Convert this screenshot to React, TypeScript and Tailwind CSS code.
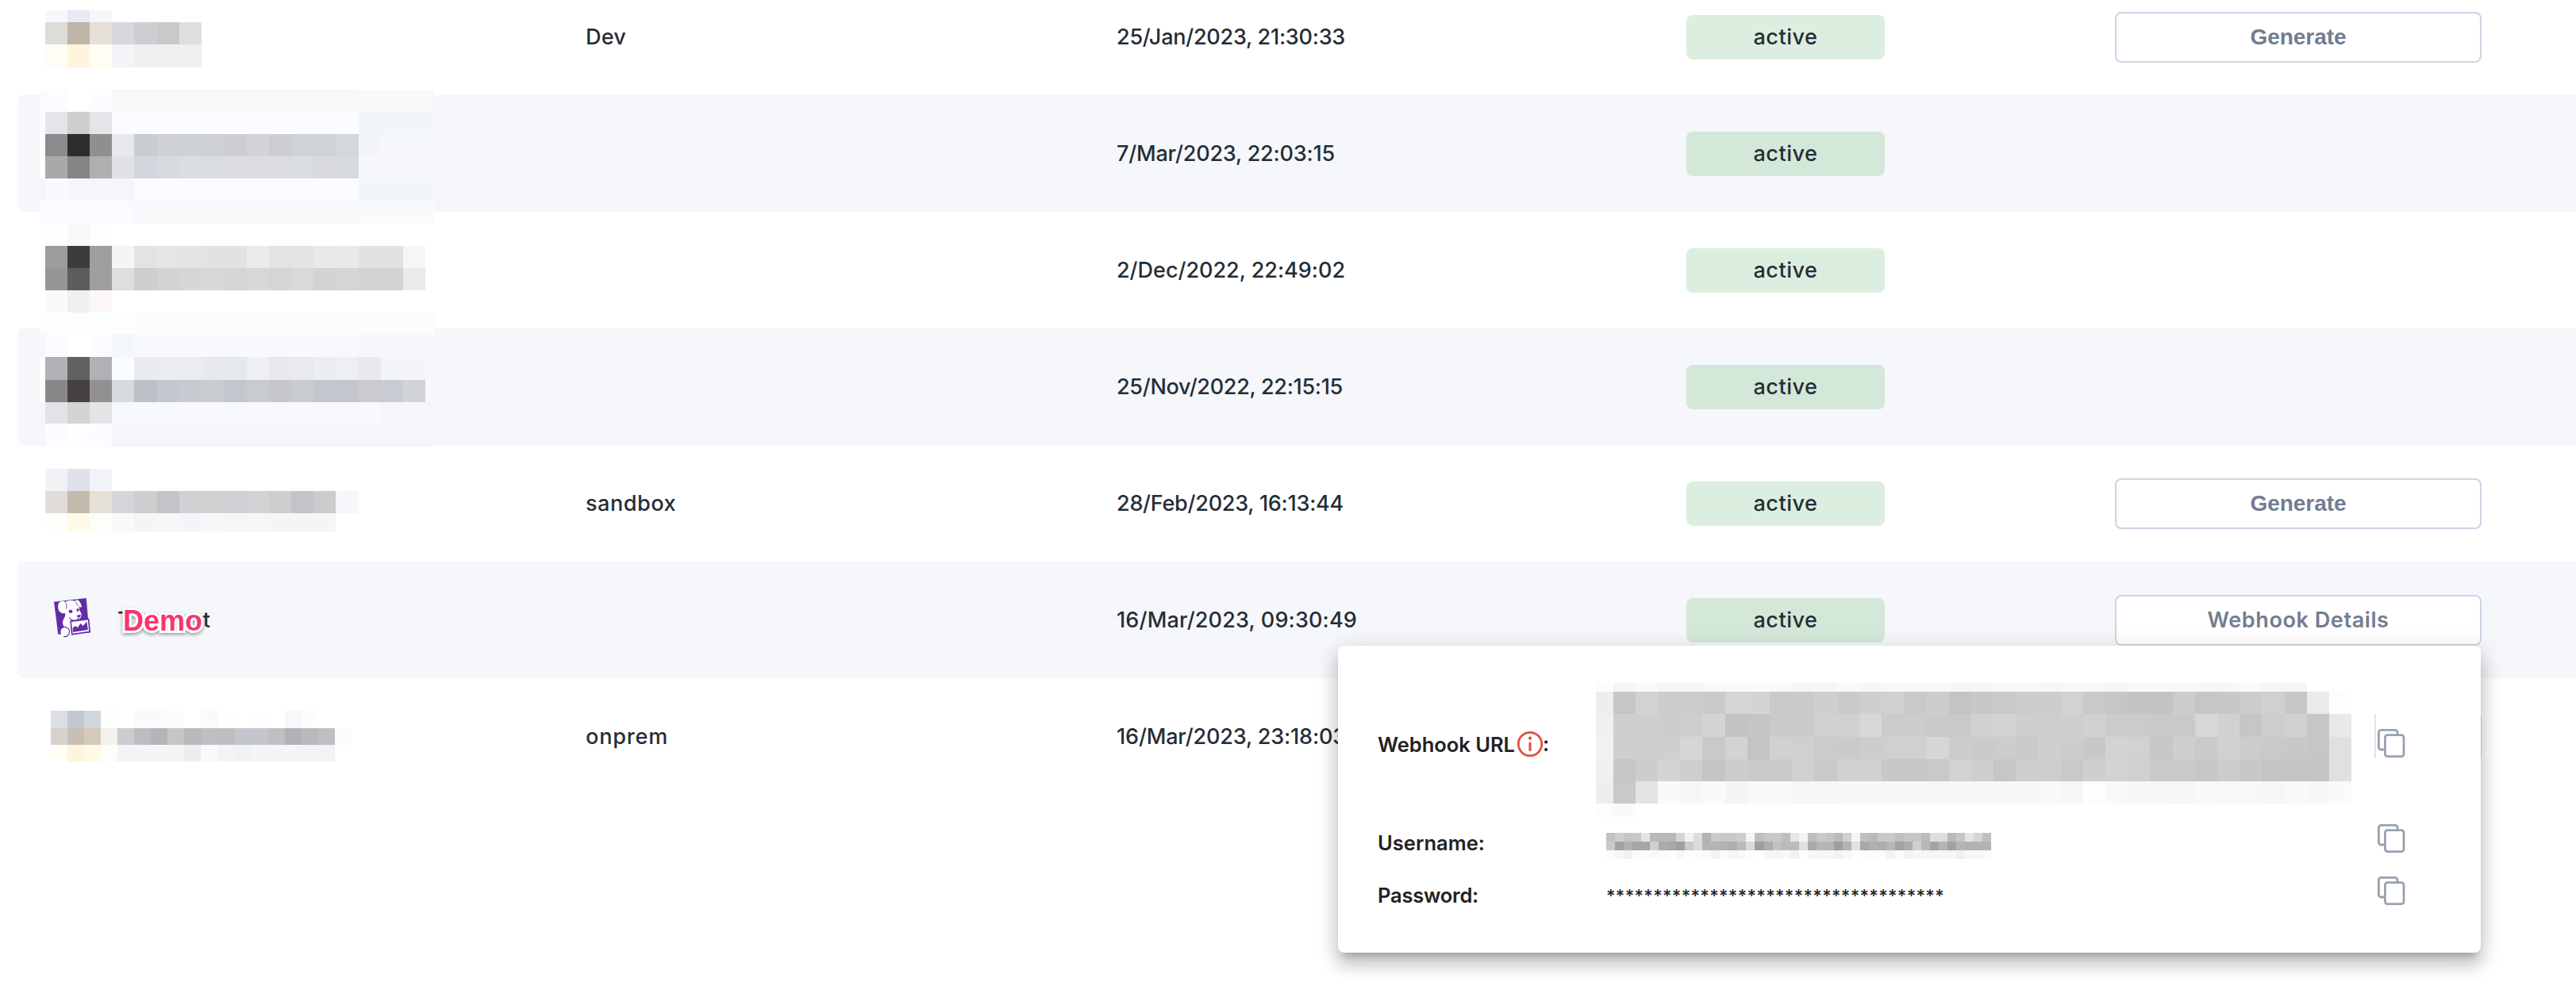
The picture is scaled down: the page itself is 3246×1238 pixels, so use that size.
import React from "react";

type Row = { env: string; date: string; action?: string; striped?: boolean; brand?: boolean };

const ROWS: Row[] = [
  { env: "Dev", date: "25/Jan/2023, 21:30:33", action: "Generate" },
  { env: "", date: "7/Mar/2023, 22:03:15", striped: true },
  { env: "", date: "2/Dec/2022, 22:49:02" },
  { env: "", date: "25/Nov/2022, 22:15:15", striped: true },
  { env: "sandbox", date: "28/Feb/2023, 16:13:44", action: "Generate" },
  { env: "", date: "16/Mar/2023, 09:30:49", action: "Webhook Details", striped: true, brand: true },
  { env: "onprem", date: "16/Mar/2023, 23:18:03" },
];

const DATE_WIDTH: Record<string, number> = {
  "25/Jan/2023, 21:30:33": 288,
  "7/Mar/2023, 22:03:15": 275,
  "2/Dec/2022, 22:49:02": 288,
  "25/Nov/2022, 22:15:15": 285,
  "28/Feb/2023, 16:13:44": 286,
  "16/Mar/2023, 09:30:49": 303,
  "16/Mar/2023, 23:18:03": 289,
};

type Band = { y: number; h: number; cells: string };

/* Cells are space separated hex colours; "-" leaves a gap, "xx" is a grey, "c*n" repeats a cell. */
function expand(cells: string): string[] {
  return cells.split(" ").flatMap((token) => {
    const [c, n] = token.split("*");
    const colour = c === "-" ? "" : c.length === 2 ? "#" + c + c + c : "#" + c;
    return Array<string>(n ? Number(n) : 1).fill(colour);
  });
}

function Mosaic({ first, edge, pitch, width, height, bands }: { first: number; edge: number; pitch: number; width: number; height: number; bands: Band[] }) {
  const at = (i: number) => (i === 0 ? first : edge + (i - 1) * pitch);
  return (
    <svg width={width} height={height} viewBox={`0 0 ${width} ${height}`} shapeRendering="crispEdges" className="block">
      {bands.flatMap((b) =>
        expand(b.cells).map((c, i) =>
          c ? <rect key={`${b.y}-${i}`} x={at(i)} y={b.y} width={Math.min(at(i + 1), width) - at(i)} height={b.h} fill={c} /> : null
        )
      )}
    </svg>
  );
}

const NAME_BANDS: Band[] = [
  { y: 13, h: 15, cells: "- f5f7fa e7eaf2 f5f7fa" },
  { y: 28, h: 28.4, cells: "- dedcd9 beb5ab e6e0d9 d6d8dd cdced1 c8c9cb dedfe1" },
  { y: 56.4, h: 28.2, cells: "- fffdf6 fff5dd fffdf4 f3f4f7 f0*2 f0f0f2" },
  { y: 112.6, h: 28.2, cells: "f9fbfe fafcff ff fafcff f6f8fa*11 f8f9fb*4" },
  { y: 140.8, h: 28.1, cells: "f9fbfe e4e5e9 cdcfcf e4e5e9 fafcff*11 f3f6f9*4" },
  { y: 168.9, h: 28.1, cells: "ff 8b8b8d 2d2d2d 8f8f8f e8e9ea c9cdd0 cfd1d4 ced2d6 d0d1d3 cdced1 d2d4d6 cdced2 cfd2d7 cfd3d8 d4d8db f3f5f9 f5f7fb*3" },
  { y: 197, h: 28.2, cells: "ff a9a9ab 858585 b0b0b2 e1e2e7 d3d7dd d7dbde dcdde1 dadee1 dcdde1 dcdde0 dcdde1 dadee1 d9dade d7dbde f5f7fb*4" },
  { y: 225.2, h: 28.1, cells: "f3f6f9 f9faff f4f6fb*3 fafbff*10 f3f6f9*4" },
  { y: 253.3, h: 28.2, cells: "fafbfe*5 f6f8fa*10 f9fafc*4" },
  { y: 281.5, h: 28.1, cells: "- fe faf7f8 fd" },
  { y: 309.6, h: 28.2, cells: "- 9c 3c 9e f5 e2e3e4 e4e5e7 e3e4e6 e1e2e3 e1e2e4 eaebed e2e3e5 e3e3e4 e7e8e9 e9e9eb e1e2e3*2 f6" },
  { y: 337.8, h: 28.1, cells: "- 96 5d 9f dddee0 cdced0 d2d3d5 d5d6d8 d6d7d8 d4d5d6 d6d7d8 d4d5d6 d8d9da d2d3d4 d4d5d6 d3d3d5 d3d4d5 e9eaec" },
  { y: 365.9, h: 28.2, cells: "- fa f0 fbf7f8" },
  { y: 394.1, h: 28.1, cells: "fcfdff*5 fbfcfd*14" },
  { y: 422.2, h: 28.2, cells: "f4f6fa fafcff ff fafcff f3f6fa f7f9fd*10 f5f7fb*4" },
  { y: 450.4, h: 28.1, cells: "ff b0b1b4 61 b0b1b4 fbfcff e9ebed eaecef ebecf0 e8e9ec e5e9ec eff0f5 e8e9ec e9eaed eceef1 eeeff4 e8e9ed f3f5f7 f3f5f7 f7f8fc" },
  { y: 478.5, h: 28.2, cells: "ff 88888a 454142 91 d7dbde bcc1c7 c3c7ce c7cad0 c9ccd1 c4c7cd c8cbd0 c6c6cb c9cdd2 c3c6cd*2 cbcbcf c8cbd1 d3d4d7 f6f8fc" },
  { y: 506.7, h: 27.6, cells: "f4f6fb e2e3e6 d3d4d6 e3e4e6 f6f8fb f7f9fd*11 f4f6fa*3" },
  { y: 534.3, h: 28.2, cells: "f4f6fb fafcff fdfeff fafcff f4f6fb*15" },
  { y: 591, h: 28, cells: "- f1f2f6 dfe2ea f3f4f9" },
  { y: 619, h: 28, cells: "- e0dcd9 c5bbad e6e1d6 d5d6da cdced0 c3c4c8 d0d1d3*2 cfd0d3 d2d3d5 cdced0 c3c4c9 cbccce f6f7fb" },
  { y: 647, h: 23, cells: "- fefefa fffae8 fefef9 f8f9fb f5 f6 f4f5f8 f6f7f9 f6*2 f5*2 f4f5f7" },
];

const ONPREM_BANDS: Band[] = [
  { y: 0, h: 21.5, cells: "dbdee3 c3c7d1 d1d5dd fdfdfe ff fafafc*2 fdfafc ff fafafb fe ff fe ff f8f8fa fcfcfd ff" },
  { y: 21.5, h: 21, cells: "d7d3ca c9bfb4 d4caba f5f2ee cccdd1 bbbdc0 b4b5b8 c4c6c7 b6babd bdbfc2 bdbec2 c3c6ca*2 bfc0c3 b0b3b6 b8b9bc bcc0c3 fc" },
  { y: 42.5, h: 21, cells: "fffff7 fff5dc fffae8 fd f3f3f6 f5f5f8*2 f3f3f4 eeeef0 f9 f4f4f6 f1f2f3 f5f5f8 f4f4f6 f5f5f8 f3f3f5*2" },
];

const URL_BANDS: Band[] = [
  { y: 0, h: 11, cells: "fc f5 f9 f5*2 f9*4 f5*2 f9 f6 f8*3 f6*2 f8*2 f6 f8*2 f6 f8*3 f7*2 f9 f5*2" },
  { y: 11, h: 28.3, cells: "ee c6 d2 cc cc ca d5 d4 ca ca cf ca cf d0 c9 cd c4 c8 ca cc cd d2 c9 c6 c3 c3 cc c6 c8 cc d0 c7 ea fd" },
  { y: 39.3, h: 28.2, cells: "f0 cf cf cd ce d4 c3 c5 ca ca d0 d1 d7 cb cd ca c9 d1 d3 cf ce cf d1 cc cb c9 c9 d7 d1 c6 ce d1 c6 e8" },
  { y: 67.5, h: 28.2, cells: "f2f0f1 cf cf cf d5 c9 d3 c4 d1 d0 cb ca cd d0 d0 d6 cc ca cd ca cf cd c8 d3 d2 c8 cf ca d1 cc c9 c8 c6 e0" },
  { y: 95.7, h: 28.3, cells: "f0 c7 cd d4 cf c5 cc ca ca d1 c9 d1 d1 c8 c8 c9 d2 cf c6 ce ce c9 cf d3 d0 c9 c9 c6 cc c8 c4 c4 c4 e0" },
  { y: 124, h: 28, cells: "ee c9 e4 fa f7 fa f5 f9*2 f6*2 f7*9 f9 f7 fd f9 f7*2 f6 f9 f8*2 f6 f9 f7 fa" },
  { y: 152, h: 17, cells: "fd fa" },
];

const USER_BANDS: Band[] = [
  { y: 0, h: 11, cells: "c2 cf c5 c8 e4 ba b8 b8 d6 f2 dc b2 ca c9 c9 cd f5 bf c7 c9 be e6 f3 bd c9 c4 ba d1 f5 bf b9 c9 c9 bf c6 c6 bb dd dd b9 c6 e4 d5 bf" },
  { y: 11, h: 11, cells: "cb a1 b1 a6 a6 d0 ab a8 9f ca dc b4 b4 b3 ae bb d9 9e ad c2 bb bc e1 aa b7 b4 9f b3 e1 a8 b0 ad b7 a2 ad d1 b8 a4 b4 a1 b5 b2 b2 b3" },
  { y: 22, h: 11, cells: "fa f7 f2 fb fb f8 fa fe f8 fd fd fa f2 fa f5 f8 fe fe f5 f5 fa f2 fe f8 f5 f8 f2 f8 fe fc fc fc f3 fa f3 f8 f6 f6 f6 f6 ef f7 f7 fa" },
];

/* Text tracked to an exact advance width. */
function Fit({ children, width }: { children: string; width: number }) {
  const ref = React.useRef<HTMLSpanElement>(null);
  React.useLayoutEffect(() => {
    const el = ref.current;
    if (!el) return;
    el.style.letterSpacing = "0px";
    const natural = el.getBoundingClientRect().width;
    el.style.letterSpacing = `${(width - natural) / children.length}px`;
  }, [children, width]);
  return (
    <span ref={ref} className="inline-block whitespace-pre">
      {children}
    </span>
  );
}

function DogLogo() {
  return (
    <svg width="48" height="60" viewBox="0 0 48 60" className="block">
      <path d="M0 6.700 40.700 2 43 28 46 45.300 5.300 47.700z" fill="#632ca6" />
      <path d="M6 8.500c2-3 5.500-3.500 8-1.500 4-2 9-2.500 13-1.200.5-1.500 2-2 3.500-1 2.500 1.700 4 5 4.500 8.700-1.500.3-2.800-.3-3.500-1.500l.8 6c1.800 1.800 2.700 4 2.200 6.500-.5 3-3 4.500-6 5.500L21 31l1.500 17-13 .5c-2-3 .5-8 4-9.500-3.500-4-3-8-.5-12 1-1.700 1.500-4 1-6-4 1-7.500-1-8.500-5-.6-2.500-.5-5.500.5-7.500z" fill="#fff" />
      <path d="M14.500 7.500c1.500 2 2 5 1 8M28 6.500c-.5 1.500 1 4 3 5.500" fill="none" stroke="#632ca6" strokeWidth="0.900" />
      <ellipse cx="21" cy="18.800" rx="2.500" ry="2.100" fill="#632ca6" />
      <ellipse cx="30" cy="17" rx="1.500" ry="1.900" fill="#632ca6" />
      <path d="M28.700 24.200c1.500-1 3.500-1.400 5-1.200.2 2-.8 3.200-2.700 3.600-1-.4-1.800-1.200-2.300-2.400z" fill="#632ca6" />
      <path d="M19.500 26.500c2 3.500 6 4.500 9 3.500l3-3.200" fill="none" stroke="#632ca6" strokeWidth="1.100" />
      <path d="M20.300 30.300 44.300 27.700 46 45.300 22 48.700z" fill="#632ca6" />
      <path d="M22 32 42.800 29.500 44.200 43.800 23.500 46.700z" fill="#fff" />
      <path d="M23.800 45v-5.500l3.500-2.500 2.500 2.500 3.500-5.500 3.500 3 4.500-5.500 1.500 10.500z" fill="#632ca6" />
      <circle cx="14" cy="44" r="5.600" fill="#fff" />
      <path d="M9 40.500c4-4.500 11-1 10.500 4.500-.3 4-3.500 6-7.500 5.500" fill="none" stroke="#632ca6" strokeWidth="1.100" />
    </svg>
  );
}

function CopyIcon() {
  return (
    <svg width="36" height="38" viewBox="0 0 36 38" fill="none" stroke="#98a2b0" strokeWidth="2.800" className="block">
      <path d="M8 26H4.400a3 3 0 0 1-3-3V4.400a3 3 0 0 1 3-3H22a3 3 0 0 1 3 3V8" />
      <rect x="9.400" y="7.600" width="23.600" height="27" rx="3" />
    </svg>
  );
}

function InfoIcon() {
  return (
    <svg width="34" height="34" viewBox="0 0 34 34" fill="none" className="block">
      <circle cx="17" cy="17" r="14.700" stroke="#e25241" strokeWidth="2.800" />
      <circle cx="17" cy="9.600" r="2.100" fill="#e25241" />
      <path d="M17 16v8.500" stroke="#e25241" strokeWidth="3.200" strokeLinecap="round" />
    </svg>
  );
}

function BrandName() {
  return (
    <div className="flex items-center pl-[46px]">
      <DogLogo />
      <div className="relative ml-[32px] flex h-10 w-[117px] items-center justify-between text-[27px] font-medium text-[#252d35]">
        <span>T</span>
        <span>t</span>
        <span className="absolute top-[1px] left-[7px] text-[36px] leading-10 font-bold text-[#fb3371] [paint-order:stroke_fill] [-webkit-text-stroke:6px_white] [filter:drop-shadow(0_2px_2px_rgba(0,0,0,0.4))] font-['Liberation_Sans',sans-serif]">
          <Fit width={100}>Demo</Fit>
        </span>
      </div>
    </div>
  );
}

function TableRow({ row }: { row: Row }) {
  return (
    <div className={`grid h-[147px] grid-cols-[716px_669px_718px_540px_auto] items-center rounded-l-lg ${row.striped ? "bg-[#f5f7fb]" : "bg-white"}`}>
      <div>{row.brand && <BrandName />}</div>
      <div>{row.env && <Fit width={row.env === "Dev" ? 51 : row.env === "sandbox" ? 114 : 104}>{row.env}</Fit>}</div>
      <div>
        <Fit width={DATE_WIDTH[row.date]}>{row.date}</Fit>
      </div>
      <div className={`flex h-14 w-[250px] items-center justify-center rounded-lg ${row.striped ? "bg-[#d3e8d9]" : "bg-[#dceedf]"}`}>
        <Fit width={81}>active</Fit>
      </div>
      <div>
        {row.action && (
          <button className={`flex h-16 w-[462px] items-center justify-center rounded-lg border-2 border-[#ccd5e5] bg-white text-[#727d90] ${row.action === "Generate" ? "font-['Liberation_Sans',sans-serif] text-[28px] font-bold" : "font-semibold"}`}>
            <Fit width={row.action === "Generate" ? 121 : 229}>{row.action}</Fit>
          </button>
        )}
      </div>
    </div>
  );
}

export default function App() {
  return (
    <div className="relative h-[1238px] w-[3246px] overflow-hidden bg-white font-['Inter',sans-serif] text-[27px] leading-8 font-medium text-[#252d35]">
      <div className="-mt-[27px] ml-[22px] flex flex-col">
        {ROWS.map((row) => (
          <TableRow key={row.date} row={row} />
        ))}
      </div>

      <div className="absolute top-0 left-0">
        <Mosaic first={50} edge={56.6} pitch={28.22} width={547} height={680} bands={NAME_BANDS} />
      </div>
      <div className="absolute top-[896px] left-[64px]">
        <Mosaic first={0} edge={21} pitch={21.05} width={380} height={66} bands={ONPREM_BANDS} />
      </div>

      <section className="absolute top-[814px] left-[1686px] flex h-[387px] w-[1440px] flex-col rounded-lg bg-white pl-[50px] text-[25.500px] font-semibold text-[#222] shadow-[0_10px_10px_-6px_rgba(0,0,0,0.2),0_16px_20px_2px_rgba(0,0,0,0.14),0_6px_28px_4px_rgba(0,0,0,0.12)]">
        <div className="mt-[47px] flex h-[169px]">
          <div className="flex h-[154px] w-[275px] items-center">
            <div className="w-[175px] pt-0.5">
              <Fit width={173}>Webhook URL</Fit>
            </div>
            <InfoIcon />
            <span className="-ml-px">:</span>
          </div>
          <Mosaic first={0} edge={21.6} pitch={28.2} width={953} height={169} bands={URL_BANDS} />
          <div className="mt-[39px] ml-[28px] h-14 w-[2px] bg-[#e2e4e8]" />
          <div className="mt-[58px] ml-[2px]">
            <CopyIcon />
          </div>
        </div>
        <div className="mt-[3px] flex h-[66px] items-center">
          <div className="w-[288px] pb-[6px]">
            <Fit width={135}>Username:</Fit>
          </div>
          <div className="w-[972px]">
            <Mosaic first={0} edge={11} pitch={11.03} width={486} height={33} bands={USER_BANDS} />
          </div>
          <div className="pb-[16px]">
            <CopyIcon />
          </div>
        </div>
        <div className="flex h-[66px] items-center">
          <div className="w-[288px] pb-[6px]">
            <Fit width={127}>Password:</Fit>
          </div>
          <div className="w-[972px] pb-[6px] text-[22px] font-medium">
            <Fit width={426}>************************************</Fit>
          </div>
          <div className="pb-[16px]">
            <CopyIcon />
          </div>
        </div>
        <div className="absolute top-[88px] -right-px h-[54px] w-px bg-[#b4bcc9]" />
      </section>
    </div>
  );
}
